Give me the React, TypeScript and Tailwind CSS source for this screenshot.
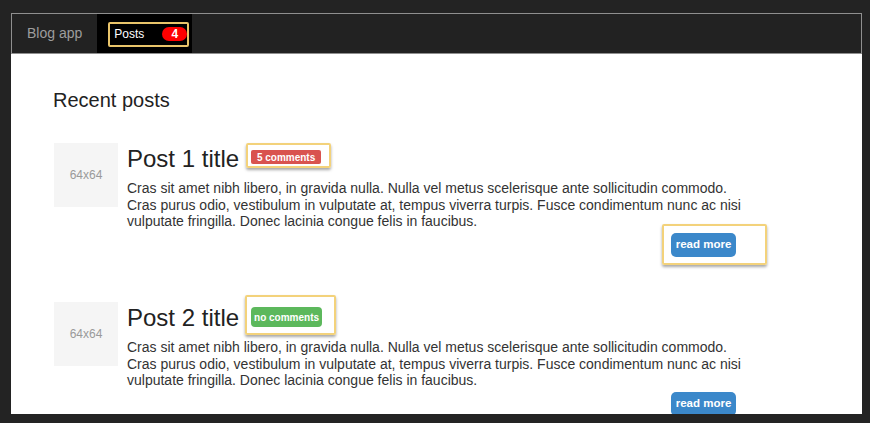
import React from "react";

const body =
  "Cras sit amet nibh libero, in gravida nulla. Nulla vel metus scelerisque ante sollicitudin commodo. Cras purus odio, vestibulum in vulputate at, tempus viverra turpis. Fusce condimentum nunc ac nisi vulputate fringilla. Donec lacinia congue felis in faucibus.";

function Highlight({ cls }: { cls: string }) {
  return (
    <span
      className={
        "pointer-events-none absolute border-2 border-[#f3d27b] rounded-[2px] shadow-[0_2px_3px_rgba(0,0,0,0.35)] " +
        cls
      }
    />
  );
}

function Post({
  title,
  label,
  labelCls,
  labelHl,
  buttonHl,
  first,
}: {
  title: string;
  label: string;
  labelCls: string;
  labelHl: string;
  buttonHl: boolean;
  first: boolean;
}) {
  return (
    <div className={"flex " + (first ? "mt-[32px]" : "mt-[45.5px]")}>
      <div className="ml-[1px] w-[64px] h-[64px] shrink-0 bg-[#f5f5f5] flex items-center justify-center text-[12px] text-[#9a9a9a]">
        64x64
      </div>
      <div className="ml-[9px] w-[620px]">
        <div className="flex items-start mt-[3px] h-[26px]">
          <h4 className="text-[24px] leading-[26px] text-[#222] font-normal">{title}</h4>
          <span className="relative ml-[12px]">
            <span className={labelCls}>{label}</span>
            <Highlight cls={labelHl} />
          </span>
        </div>
        <p className="mt-[8px] text-[14px] leading-[16.5px] text-[#333]">{body}</p>
        <div className="flex justify-end pr-[11px] mt-[3px]">
          <span className="relative">
            <button className="w-[65px] h-[24px] rounded-[5px] bg-[#3b88ca] text-white text-[11.5px] font-bold flex items-center justify-center">
              read more
            </button>
            {buttonHl && <Highlight cls="-left-[9px] -top-[9px] -right-[31px] -bottom-[8px]" />}
          </span>
        </div>
      </div>
    </div>
  );
}

export default function App() {
  return (
    <div
      className="w-[870px] h-[423px] bg-[#232323] overflow-hidden pt-[13px] pl-[11px]"
      style={{ fontFamily: '"Liberation Sans", Arial, sans-serif' }}
    >
      <div className="w-[851px] h-[401px] flex flex-col">
        <nav className="h-[41px] shrink-0 bg-[#222] border border-[#8f8f8f] flex items-stretch">
          <div className="flex items-center pl-[15px] pr-[15px] text-[14px] text-[#9d9d9d]">Blog app</div>
          <div className="bg-black flex items-center pl-[11px] pr-[3px]">
            <div className="h-[25px] border-2 border-[#e9c46a] rounded-[2px] flex items-center pl-[4px] mt-[1px]">
              <span className="text-[12px] text-white">Posts</span>
              <span className="ml-[18px] w-[25px] h-[14px] rounded-full bg-[#ff0000] text-white text-[12px] font-bold flex items-center justify-center">
                4
              </span>
            </div>
          </div>
        </nav>
        <main className="flex-1 bg-white overflow-hidden pl-[42px] pt-[35px]">
          <h2 className="text-[20px] leading-[22px] text-[#222] font-normal">Recent posts</h2>
          <Post
            first
            title="Post 1 title"
            label="5 comments"
            labelCls="mt-[4px] w-[70px] h-[14px] rounded-[2px] bg-[#d9534f] text-white text-[10px] font-bold flex items-center justify-center"
            labelHl="-left-[5px] -top-[3px] -right-[10px] -bottom-[4px]"
            buttonHl
          />
          <Post
            first={false}
            title="Post 2 title"
            label="no comments"
            labelCls="mt-[2px] w-[71px] h-[20px] rounded-[4px] bg-[#5cb85c] text-white text-[10px] font-bold flex items-center justify-center"
            labelHl="-left-[6px] -top-[10px] -right-[14px] -bottom-[8px]"
            buttonHl={false}
          />
        </main>
      </div>
    </div>
  );
}
